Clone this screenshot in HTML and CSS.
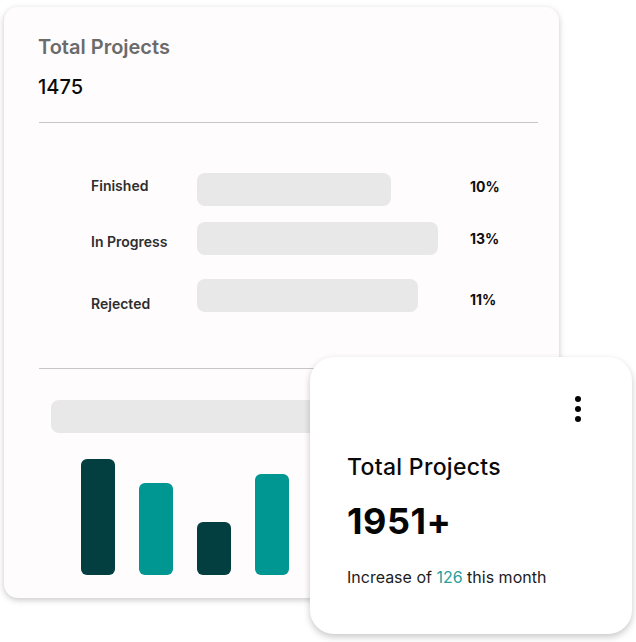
FILE: index.html
```html
<!DOCTYPE html>
<html lang="en">
<head>
<meta charset="utf-8">
<title>Total Projects</title>
<link rel="stylesheet" href="styles.css">
</head>
<body>
<div class="stage">
  <section class="card-back">
    <h2 class="back-title">Total Projects</h2>
    <div class="back-number">1475</div>
    <hr class="divider divider-top">
    <div class="rows">
      <div class="row row-1">
        <span class="label">Finished</span>
        <span class="bar bar-finished"></span>
        <span class="pct">10%</span>
      </div>
      <div class="row row-2">
        <span class="label">In Progress</span>
        <span class="bar bar-progress"></span>
        <span class="pct">13%</span>
      </div>
      <div class="row row-3">
        <span class="label">Rejected</span>
        <span class="bar bar-rejected"></span>
        <span class="pct">11%</span>
      </div>
    </div>
    <hr class="divider divider-bottom">
    <div class="placeholder"></div>
    <div class="chart">
      <span class="col col-dark col-h1"></span>
      <span class="col col-teal col-h2"></span>
      <span class="col col-dark col-h3"></span>
      <span class="col col-teal col-h4"></span>
    </div>
  </section>

  <section class="card-front">
    <div class="menu" aria-label="More options">
      <span class="dot"></span>
      <span class="dot"></span>
      <span class="dot"></span>
    </div>
    <h3 class="front-title">Total Projects</h3>
    <div class="front-number">1951+</div>
    <p class="front-note">Increase of <span class="accent">126</span> this month</p>
  </section>
</div>
</body>
</html>
```

FILE: styles.css
```css
* {
  box-sizing: border-box;
}

html, body {
  margin: 0;
  padding: 0;
  background: #ffffff;
}

body {
  font-family: "Inter", "Noto Sans", sans-serif;
  color: #111111;
}

.stage {
  position: relative;
  width: 636px;
  height: 642px;
  padding: 7px 0 0 4px;
}

/* ---------- back card ---------- */
.card-back {
  width: 555px;
  height: 591px;
  background: #fffcfd;
  border-radius: 14px;
  box-shadow: 0 2px 6px rgba(0, 0, 0, 0.22);
  padding: 28px 21px 0 34px;
  overflow: hidden;
}

.back-title {
  margin: 0;
  font-size: 20px;
  line-height: 24px;
  font-weight: 600;
  color: #6b6b6b;
}

.back-number {
  margin-top: 16px;
  font-size: 20px;
  line-height: 24px;
  font-weight: 500;
  color: #0b0b0b;
}

.divider {
  border: 0;
  height: 1px;
  background: #c6c6c6;
  margin: 0 0 0 1px;
}

.divider-top {
  margin-top: 23px;
}

.rows {
  margin-top: 50px;
  padding-left: 53px;
  display: flex;
  flex-direction: column;
}

.row {
  display: grid;
  grid-template-columns: 106px 273px auto;
  align-items: start;
  height: 33px;
}

.row-2 {
  margin-top: 16px;
}

.row-3 {
  margin-top: 24px;
}

.label {
  font-size: 14px;
  line-height: 17px;
  font-weight: 600;
  color: #2e2e2e;
}

.pct {
  font-size: 14px;
  line-height: 17px;
  font-weight: 700;
  color: #0d0d0d;
}

.row-1 .label { margin-top: 4px; }
.row-1 .pct { margin-top: 5px; }
.row-2 .label { margin-top: 11px; }
.row-2 .pct { margin-top: 8px; }
.row-3 .label { margin-top: 16px; }
.row-3 .pct { margin-top: 12px; }

.bar {
  display: block;
  height: 33px;
  border-radius: 8px;
  background: #e8e8e8;
}

.bar-finished { width: 194px; }
.bar-progress { width: 241px; }
.bar-rejected { width: 221px; }

.divider-bottom {
  margin-top: 56px;
}

.placeholder {
  margin: 31px 0 0 13px;
  width: 480px;
  height: 33px;
  border-radius: 8px;
  background: #e8e8e8;
}

.chart {
  margin: 26px 0 0 43px;
  height: 116px;
  display: flex;
  align-items: flex-end;
  gap: 24px;
}

.col {
  display: block;
  width: 34px;
  border-radius: 6px;
}

.col-dark { background: #033f40; }
.col-teal { background: #009692; }

.col-h1 { height: 116px; }
.col-h2 { height: 92px; }
.col-h3 { height: 53px; }
.col-h4 { height: 101px; }

/* ---------- front card (overlay) ---------- */
.card-front {
  position: absolute;
  left: 310px;
  top: 357px;
  width: 322px;
  height: 277px;
  background: #ffffff;
  border-radius: 24px;
  box-shadow: 0 3px 7px rgba(0, 0, 0, 0.22);
  padding: 39px 51px 0 37px;
  display: flex;
  flex-direction: column;
}

.menu {
  align-self: flex-end;
  display: flex;
  flex-direction: column;
  gap: 4px;
}

.dot {
  display: block;
  width: 6px;
  height: 6px;
  border-radius: 50%;
  background: #050505;
}

.front-title {
  margin: 31px 0 0;
  font-size: 23px;
  line-height: 28px;
  font-weight: 500;
  letter-spacing: 0.3px;
  color: #0a0a0a;
}

.front-number {
  margin-top: 18px;
  font-size: 36px;
  line-height: 44px;
  font-weight: 700;
  letter-spacing: 0.5px;
  color: #050505;
}

.front-note {
  margin: 25px 0 0;
  font-size: 16px;
  line-height: 19px;
  font-weight: 400;
  color: #1c1c1c;
}

.accent {
  color: #24a09c;
}
```
